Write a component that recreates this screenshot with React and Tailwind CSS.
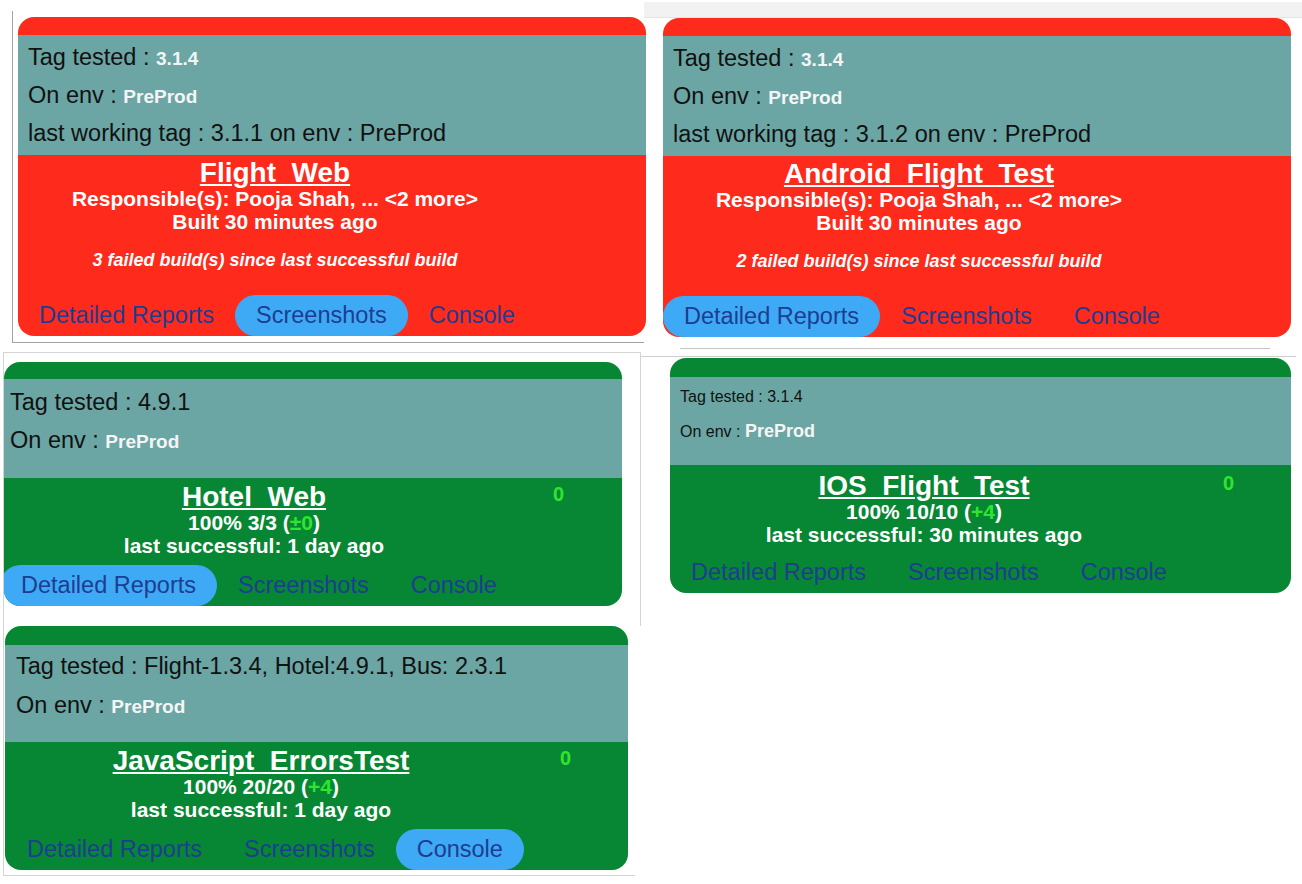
import React from "react";

const RED = "bg-[#fe2a1c]";
const GREEN = "bg-[#078734]";
const TEAL = "bg-[#6ba6a5]";

function Links({ active }) {
  const items = ["Detailed Reports", "Screenshots", "Console"];
  return (
    <div className="flex h-[41px]">
      {items.map((t, i) => (
        <div
          key={t}
          className={
            "flex items-center rounded-full px-[21px] text-[23.5px] leading-none text-[#1d3d92] " +
            (i === active ? "bg-[#3eaaf5]" : "")
          }
        >
          {t}
        </div>
      ))}
    </div>
  );
}

function Val({ children, size = "text-[19px]" }) {
  return <span className={size + " font-bold text-[#f5f5f5]"}>{children}</span>;
}

function Plus({ children }) {
  return <span className="text-[#2ee62e]">{children}</span>;
}

function RedCard({ tag, lastTag, title, failed, active, colW }) {
  return (
    <div className={"w-[628px] rounded-[16px] overflow-hidden flex flex-col " + RED}>
      <div className="h-[18px]" />
      <div className={"h-[120px] pt-[3px] pl-[10px] text-[23.5px] text-[#111]" + " " + TEAL}>
        <div className="h-[38px] leading-[38px] whitespace-nowrap">
          Tag tested : <Val>{tag}</Val>
        </div>
        <div className="h-[38px] leading-[38px] whitespace-nowrap">
          On env : <Val>PreProd</Val>
        </div>
        <div className="h-[38px] leading-[38px] whitespace-nowrap">
          last working tag : {lastTag} on env : PreProd
        </div>
      </div>
      <div className="pt-[4px] text-white">
        <div className={"flex flex-col items-center text-center " + colW}>
          <div className="h-[28px] leading-[28px] text-[28px] font-bold underline underline-offset-[2px] decoration-[2px] whitespace-nowrap">
            {title}
          </div>
          <div className="h-[23px] leading-[23px] text-[21px] font-bold whitespace-nowrap">
            Responsible(s): Pooja Shah, ... &lt;2 more&gt;
          </div>
          <div className="h-[23px] leading-[23px] text-[21px] font-bold whitespace-nowrap">
            Built 30 minutes ago
          </div>
          <div className="mt-[16px] h-[22px] leading-[22px] text-[18px] font-bold italic whitespace-nowrap">
            {failed} failed build(s) since last successful build
          </div>
        </div>
        <div className="mt-[24px]">
          <Links active={active} />
        </div>
      </div>
    </div>
  );
}

function GreenCard({
  width,
  strip,
  tealH,
  tealPt,
  lineH,
  textPl,
  textSize,
  valSize,
  tagLine,
  title,
  stats,
  plus,
  last,
  colW,
  zeroPl,
  bodyPt,
  linksMt,
  active,
  linkPl,
}) {
  return (
    <div className={"rounded-[16px] overflow-hidden flex flex-col " + width + " " + GREEN}>
      <div className={strip} />
      <div className={tealH + " " + tealPt + " " + textPl + " " + textSize + " text-[#111] " + TEAL}>
        <div className={lineH + " whitespace-nowrap"}>{tagLine}</div>
        <div className={lineH + " whitespace-nowrap"}>
          On env : <Val size={valSize}>PreProd</Val>
        </div>
      </div>
      <div className={bodyPt + " text-white"}>
        <div className="flex">
          <div className={"flex flex-col items-center text-center shrink-0 " + colW}>
            <div className="h-[28px] leading-[28px] text-[28px] font-bold underline underline-offset-[2px] decoration-[2px] whitespace-nowrap">
              {title}
            </div>
            <div className="h-[23px] leading-[23px] text-[21px] font-bold whitespace-nowrap">
              {stats} (<Plus>{plus}</Plus>)
            </div>
            <div className="h-[23px] leading-[23px] text-[21px] font-bold whitespace-nowrap">
              last successful: {last}
            </div>
          </div>
          <div className={"text-[20px] font-bold leading-[22px] text-[#2ee62e] " + zeroPl}>0</div>
        </div>
        <div className={linksMt + " " + linkPl}>
          <Links active={active} />
        </div>
      </div>
    </div>
  );
}

export default function App() {
  return (
    <div className="w-[1302px] h-[884px] bg-white overflow-hidden font-['Liberation_Sans',Arial,sans-serif]">
      {/* top row */}
      <div className="flex h-[350px]">
        <div className="w-[644px] shrink-0 pt-[11px] pl-[12px]">
          <div className="h-[332px] border-l border-b border-[#a3a3a3] pl-[5px] pt-[6px]">
            <RedCard
              tag="3.1.4"
              lastTag="3.1.1"
              title="Flight_Web"
              failed="3"
              active={1}
              colW="w-[514px]"
            />
          </div>
        </div>
        <div className="flex-1 flex flex-col">
          <div className="h-[16px] mt-[2px] bg-[#f2f2f2] border-b border-[#e4e4e4]" />
          <div className="pl-[19px]">
            <RedCard
              tag="3.1.4"
              lastTag="3.1.2"
              title="Android_Flight_Test"
              failed="2"
              active={0}
              colW="w-[512px]"
            />
          </div>
          <div className="ml-[36px] w-[590px] mt-[11px] h-px bg-[#c4c4c4]" />
        </div>
      </div>

      {/* second row */}
      <div className="flex">
        <div className="w-[641px] shrink-0 pl-[3px] pt-[2px]">
          <div className="border-l border-t border-r border-[#d4d4d4] pt-[9px] pb-[20px]">
            <GreenCard
              width="w-[618px]"
              strip="h-[17px]"
              tealH="h-[99px]"
              tealPt="pt-[4px]"
              lineH="h-[38px] leading-[38px]"
              textPl="pl-[6px]"
              textSize="text-[23.5px]"
              valSize="text-[19px]"
              tagLine="Tag tested : 4.9.1"
              title="Hotel_Web"
              stats="100% 3/3"
              plus="±0"
              last="1 day ago"
              colW="w-[500px]"
              zeroPl="pl-[49px]"
              bodyPt="pt-[5px]"
              linksMt="mt-[8px]"
              active={0}
              linkPl="-ml-[4px]"
            />
          </div>
          <div className="w-[632px] border-l border-b border-[#d4d4d4] pl-[1px] pb-[5px]">
            <GreenCard
              width="w-[623px]"
              strip="h-[19px]"
              tealH="h-[97px]"
              tealPt="pt-[2px]"
              lineH="h-[39px] leading-[39px]"
              textPl="pl-[11px]"
              textSize="text-[23.5px]"
              valSize="text-[19px]"
              tagLine="Tag tested : Flight-1.3.4, Hotel:4.9.1, Bus: 2.3.1"
              title="JavaScript_ErrorsTest"
              stats="100% 20/20"
              plus="+4"
              last="1 day ago"
              colW="w-[512px]"
              zeroPl="pl-[43px]"
              bodyPt="pt-[5px]"
              linksMt="mt-[8px]"
              active={2}
              linkPl="pl-[1px]"
            />
          </div>
        </div>
        <div className="flex-1 pt-[6px]">
          <div className="h-px w-[655px] bg-[#cfcfcf]" />
          <div className="pl-[29px] pt-[1px]">
            <GreenCard
              width="w-[621px]"
              strip="h-[19px]"
              tealH="h-[88px]"
              tealPt="pt-[3px]"
              lineH="h-[34px] leading-[34px]"
              textPl="pl-[10px]"
              textSize="text-[16px]"
              valSize="text-[18px]"
              tagLine="Tag tested : 3.1.4"
              title="IOS_Flight_Test"
              stats="100% 10/10"
              plus="+4"
              last="30 minutes ago"
              colW="w-[508px]"
              zeroPl="pl-[45px]"
              bodyPt="pt-[7px]"
              linksMt="mt-[6px]"
              active={-1}
              linkPl=""
            />
          </div>
        </div>
      </div>
    </div>
  );
}
